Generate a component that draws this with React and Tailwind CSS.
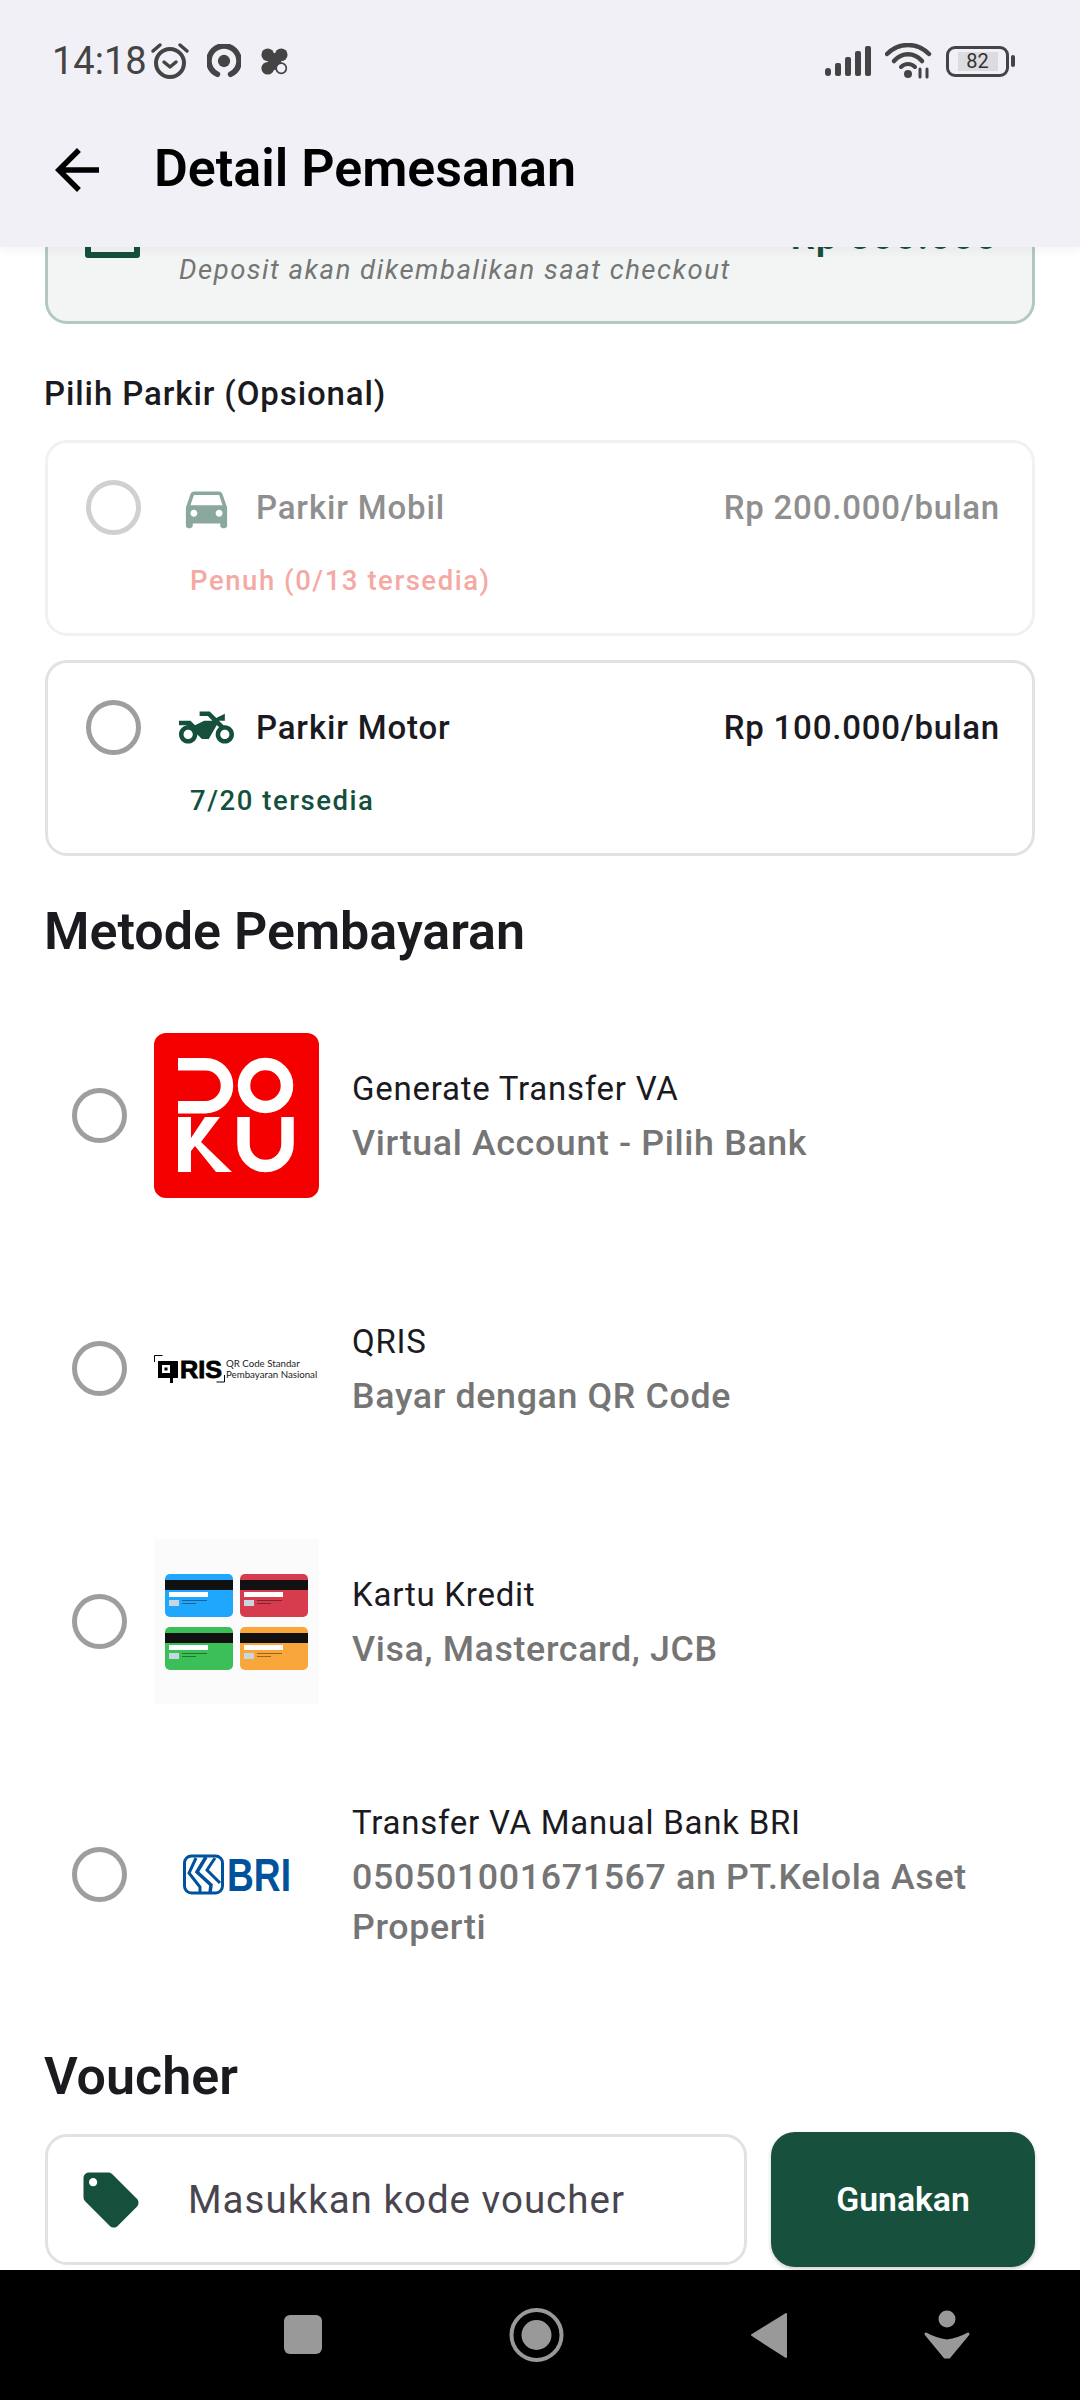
import React from "react";
import { MdArrowBack, MdDirectionsCar, MdTwoWheeler, MdLocalOffer } from "react-icons/md";

const Radio = ({ light }) => (
  <div className={`w-[55px] h-[55px] rounded-full border-[5px] shrink-0 ${light ? "border-[#d0d0d0]" : "border-[#9e9e9e]"}`} />
);

const StatusLeft = () => (
  <div className="flex items-center">
    <span className="w-[98px] text-[38px] leading-none text-[#444]">14:18</span>
    <svg width="40" height="38" viewBox="0 0 40 38" fill="none" stroke="#444">
      <circle cx="20" cy="21" r="14" strokeWidth="4" />
      <path d="M14 20l6 5 6-5" strokeWidth="3.5" strokeLinecap="round" strokeLinejoin="round" />
      <path d="M3 9l7-6M37 9l-7-6" strokeWidth="3.5" strokeLinecap="round" />
    </svg>
    <svg width="34" height="34" viewBox="0 0 36 36" className="ml-[17px]" fill="none" stroke="#444">
      <path d="M11 32C5 29 2 24 2 18a16 16 0 0 1 32 0c0 6-3 11-9 14" strokeWidth="6" strokeLinecap="round" />
      <circle cx="18" cy="18" r="6.5" fill="#444" stroke="none" />
    </svg>
    <svg width="27" height="27" viewBox="0 0 32 32" className="ml-[20px]">
      <g fill="#444">
        <circle cx="8" cy="8" r="7.500" />
        <circle cx="24" cy="8" r="7.500" />
        <circle cx="8" cy="24" r="7.500" />
        <rect x="8" y="6" width="16" height="20" />
      </g>
      <circle cx="24" cy="24" r="6" fill="#f1f0f7" stroke="#444" strokeWidth="2" />
    </svg>
  </div>
);

const StatusRight = () => (
  <div className="flex items-center">
    <svg width="50" height="32" viewBox="0 0 50 32" fill="#444">
      <rect x="1" y="23" width="6" height="8" rx="3" />
      <rect x="11" y="18" width="6" height="13" rx="2" />
      <rect x="21" y="12" width="6" height="19" rx="2" />
      <rect x="31" y="6" width="6" height="25" rx="2" />
      <rect x="41" y="1" width="6" height="30" rx="2" />
    </svg>
    <svg width="48" height="36" viewBox="0 0 48 36" className="ml-[11px]" fill="none" stroke="#444" strokeLinecap="round">
      <path d="M2 11C14 -1 32 -1 44 11" strokeWidth="4.500" />
      <path d="M9 18C17 9 29 9 37 18" strokeWidth="4.500" />
      <path d="M16 24C20 20 26 20 30 24" strokeWidth="4" />
      <circle cx="23" cy="31" r="4" fill="#444" stroke="none" />
      <path d="M35 26v8M42 26v8" strokeWidth="3" />
    </svg>
    <div className="ml-[13px] w-[63px] h-[31px] rounded-[9px] border-[3px] border-[#444] flex items-center justify-center">
      <div className="w-[40px] h-[19px] bg-[#dcdce0] flex items-center justify-center text-[20px] leading-none text-[#333]">82</div>
    </div>
    <div className="ml-[2px] w-[4px] h-[12px] rounded-[2px] bg-[#444]" />
  </div>
);

const ParkingCard = ({ icon, name, price, note, noteCls, disabled }) => (
  <div className={`h-[196px] rounded-[22px] border-[3px] pl-[38px] pr-[32px] pt-[37px] bg-white ${disabled ? "border-[#f1f1f1]" : "border-[#e2e2e2]"}`}>
    <div className="flex items-center h-[55px]">
      <Radio light={disabled} />
      <div className="ml-[38px] w-[55px] flex justify-center">{icon}</div>
      <span className={`ml-[22px] pt-[1px] text-[33px] font-medium tracking-[0.85px] ${disabled ? "text-[#8f8f8f]" : "text-[#1a1a1f]"}`}>{name}</span>
      <span className={`ml-auto pt-[1px] text-[33px] font-medium tracking-[0.8px] ${disabled ? "text-[#8f8f8f]" : "text-[#1a1a1f]"}`}>{price}</span>
    </div>
    <div className={`ml-[104px] mt-[28px] text-[27.5px] leading-[36px] font-medium tracking-[1.55px] ${noteCls}`}>{note}</div>
  </div>
);

const Doku = () => (
  <svg width="165" height="165" viewBox="0 0 165 165" role="img" aria-label="DOKU">
    <rect width="165" height="165" rx="12" fill="#f40000" />
    <g fill="none" stroke="#fff" strokeWidth="12.500">
      <path d="M24 31.200H51.500a21.500 21.500 0 0 1 0 43H24" />
      <circle cx="111.500" cy="52.500" r="21.500" />
      <path d="M89.500 84V111a22 22 0 0 0 44 0V84" />
    </g>
    <polygon fill="#fff" points="24,84 37,84 37,105 51,84 66,84 47,109 78,139 62,139 41,113 37,118 37,139 24,139" />
  </svg>
);

const Qris = () => (
  <div className="w-[165px] h-[165px] flex items-center relative">
    <svg width="72" height="30" viewBox="0 0 72 30" className="shrink-0">
      <path d="M.5 8V1.500h8M70.500 21v7h-8" fill="none" stroke="#000" strokeWidth="1" />
      <path d="M4 7h20v17h-5v5h-3v-5H4z" fill="#000" />
      <rect x="8" y="11" width="8" height="8" fill="#fff" />
      <rect x="10.500" y="13.500" width="3" height="3" fill="#000" />
      <text x="26" y="24" fontFamily="'Liberation Sans', sans-serif" fontWeight="700" fontSize="23.500" stroke="#000" strokeWidth="0.8" textLength="42" lengthAdjust="spacingAndGlyphs">RIS</text>
    </svg>
    <div className="font-['Lato',sans-serif] text-[9.7px] leading-[10.500px] text-[#222] whitespace-nowrap">
      <div>QR Code Standar</div>
      <div>Pembayaran Nasional</div>
    </div>
  </div>
);

const CreditCard = ({ color }) => (
  <div className="rounded-[5px] h-[43px] overflow-hidden pt-[6px]" style={{ background: color }}>
    <div className="h-[10px] bg-[#111]" />
    <div className="mt-[2px] ml-[4px] w-[39px] h-[5px] bg-white" />
    <div className="mt-[3px] ml-[4px] flex gap-[3px]">
      <div className="w-[10px] h-[6px] bg-[#c8d6e2]" />
      <div>
        <div className="w-[25px] h-[1px] bg-black/40" />
        <div className="mt-[2px] w-[14px] h-[1px] bg-black/40" />
      </div>
    </div>
  </div>
);

const Cards = () => (
  <div className="w-[165px] h-[165px] bg-[#fbfbfb] px-[11px] pt-[35px]">
    <div className="grid grid-cols-2 gap-x-[7px] gap-y-[10px]">
      <CreditCard color="#1ea7fd" />
      <CreditCard color="#d63c4d" />
      <CreditCard color="#3cbf58" />
      <CreditCard color="#f9a63a" />
    </div>
  </div>
);

const Bri = () => (
  <div className="w-[165px] h-[165px] flex items-center pl-[29px]">
    <svg width="41" height="42" viewBox="0 0 41 42" aria-hidden="true" className="shrink-0">
      <g fill="none" stroke="#00529c">
        <rect x="1.500" y="2" width="38" height="37" rx="7" strokeWidth="3" />
        <path d="M13 4L6 19l11 14 0 6" strokeWidth="3" />
        <path d="M23 3L14 18l14 13-1 8" strokeWidth="3.500" />
        <path d="M32 4L24 16l13 13" strokeWidth="3" />
      </g>
    </svg>
    <span className="ml-[3px] font-['Liberation_Sans',sans-serif] font-bold text-[47px] leading-none text-[#00529c] origin-left scale-x-[0.79]">BRI</span>
  </div>
);

const PayRow = ({ logo, title, sub }) => (
  <div className="flex items-center h-[253px] pl-[27px]">
    <Radio />
    <div className="ml-[27px] shrink-0">{logo}</div>
    <div className="ml-[33px] flex-1 min-w-0">
      <div className="text-[33px] leading-[50px] tracking-[0.75px] text-[#1a1a1f]">{title}</div>
      <div className="mt-[4px] text-[35.750px] leading-[50px] font-medium tracking-[0.65px] text-[#757575]">{sub}</div>
    </div>
  </div>
);

export default function App() {
  return (
    <div className="w-[1080px] h-[2400px] flex flex-col bg-white overflow-hidden font-['Roboto',sans-serif]">
      <header className="h-[247px] shrink-0 bg-[#f1f0f7] relative z-10 shadow-[0_2px_12px_rgba(0,0,0,0.06)]">
        <div className="h-[122px] pl-[52px] pr-[65px] flex items-center justify-between">
          <StatusLeft />
          <StatusRight />
        </div>
        <div className="flex items-center h-[93px] pl-[44px]">
          <MdArrowBack size={66} color="#000" className="mt-[3px]" />
          <h1 className="ml-[44px] text-[52px] font-semibold text-black">Detail Pemesanan</h1>
        </div>
      </header>

      <main className="flex-1 min-h-0 overflow-hidden px-[45px]">
        <div className="-mt-[76px] h-[153px] rounded-[22px] border-[3px] border-[#b3c8c0] bg-[#f3f5f4] flex justify-between pl-[37px] pr-[34px] relative">
          <div className="w-[55px] h-[55px] mt-[29px] border-[6px] border-[#14503c] rounded-[3px]" />
          <div className="absolute left-[131px] top-[75px] text-[27.500px] italic tracking-[1.5px] text-[#757575]">Deposit akan dikembalikan saat checkout</div>
          <div className="text-[38.500px] font-semibold tracking-[0.9px] text-[#14503c] mt-[33px]">Rp 500.000</div>
        </div>

        <div className="mt-[50px] -ml-[1px] text-[33px] leading-[40px] font-medium tracking-[0.9px] text-[#1a1a1f]">Pilih Parkir (Opsional)</div>

        <div className="mt-[26px] flex flex-col gap-[24px]">
          <ParkingCard disabled icon={<MdDirectionsCar size={55} color="#8aa89d" />} name="Parkir Mobil" price="Rp 200.000/bulan" note="Penuh (0/13 tersedia)" noteCls="text-[#f4a9a3]" />
          <ParkingCard icon={<MdTwoWheeler size={55} color="#14503c" className="shrink-0" />} name="Parkir Motor" price="Rp 100.000/bulan" note="7/20 tersedia" noteCls="text-[#14503c]" />
        </div>

        <h2 className="mt-[43px] -ml-[1px] text-[52px] leading-[66px] font-semibold text-[#1a1a1f]">Metode Pembayaran</h2>

        <div className="mt-[24px]">
          <PayRow logo={<Doku />} title="Generate Transfer VA" sub="Virtual Account - Pilih Bank" />
          <PayRow logo={<Qris />} title="QRIS" sub="Bayar dengan QR Code" />
          <PayRow logo={<Cards />} title="Kartu Kredit" sub="Visa, Mastercard, JCB" />
          <PayRow logo={<Bri />} title="Transfer VA Manual Bank BRI" sub="050501001671567 an PT.Kelola Aset Properti" />
        </div>

        <h2 className="mt-[43px] -ml-[1px] text-[52px] leading-[66px] font-semibold text-[#1a1a1f]">Voucher</h2>

        <div className="mt-[22px] flex items-center gap-[24px]">
          <div className="w-[702px] h-[131px] shrink-0 rounded-[22px] border-[3px] border-[#e2e2e2] flex items-center pl-[30px]">
            <MdLocalOffer size={66} color="#14503c" />
            <span className="ml-[44px] text-[38.500px] tracking-[1px] text-[#49454f]">Masukkan kode voucher</span>
          </div>
          <button className="w-[264px] h-[135px] shrink-0 rounded-[24px] bg-[#17503c] pt-[2px] text-white text-[33.750px] font-semibold shadow-[0_2px_4px_rgba(0,0,0,0.2)]">Gunakan</button>
        </div>
      </main>

      <nav className="h-[130px] shrink-0 bg-black relative z-10 flex items-center">
        <svg width="1080" height="60" viewBox="0 0 1080 60" className="block">
          <rect x="284" y="10" width="38" height="39" rx="6" fill="#999" />
          <circle cx="536.500" cy="30" r="25" fill="none" stroke="#999" strokeWidth="4" />
          <circle cx="536.500" cy="30" r="15" fill="#999" />
          <path d="M786 9v43L752 30z" fill="#999" stroke="#999" strokeLinejoin="round" strokeWidth="2" />
          <circle cx="947" cy="14" r="8.500" fill="#999" />
          <path d="M926 29c7 4 14 6 21 7 7-1 14-3 21-7l-19 23h-4z" fill="#999" stroke="#999" strokeWidth="3" strokeLinejoin="round" />
        </svg>
      </nav>
    </div>
  );
}
